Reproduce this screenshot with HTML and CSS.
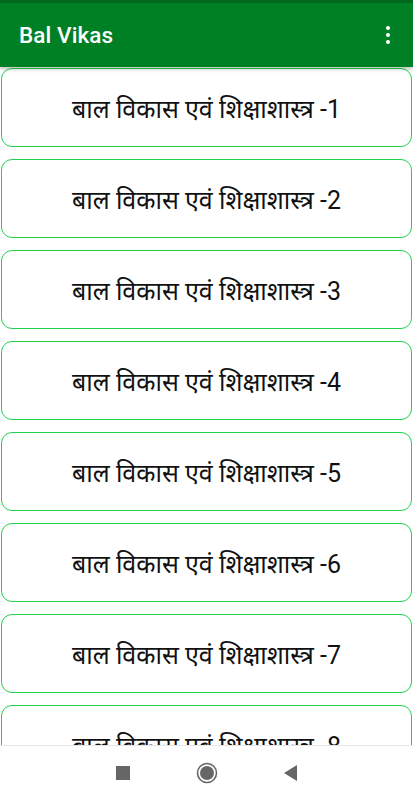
FILE: index.html
```html
<!DOCTYPE html>
<html lang="hi">
<head>
    <meta charset="UTF-8">
    <meta name="viewport" content="width=device-width, initial-scale=1.0">
    <title>Bal Vikas</title>
    <link rel="stylesheet" href="styles.css">
</head>
<body>
    <div class="statusBar"></div>

    <!-- Toolbar -->
    <header class="appBar">
        <h1>Bal Vikas</h1>
        <span class="menuDots"><i></i><i></i><i></i></span>
    </header>

    <main class="chapterList">
        <div class="chapter">बाल विकास एवं शिक्षाशास्त्र -1</div>
        <div class="chapter">बाल विकास एवं शिक्षाशास्त्र -2</div>
        <div class="chapter">बाल विकास एवं शिक्षाशास्त्र -3</div>
        <div class="chapter">बाल विकास एवं शिक्षाशास्त्र -4</div>
        <div class="chapter">बाल विकास एवं शिक्षाशास्त्र -5</div>
        <div class="chapter">बाल विकास एवं शिक्षाशास्त्र -6</div>
        <div class="chapter">बाल विकास एवं शिक्षाशास्त्र -7</div>
        <div class="chapter">बाल विकास एवं शिक्षाशास्त्र -8</div>
    </main>

    <!-- Android navigation -->
    <nav class="navBar">
        <svg width="14" height="14" viewBox="0 0 14 14"><rect x="0" y="0" width="14" height="14" fill="#666"/></svg>
        <svg width="22" height="22" viewBox="0 0 22 22"><circle cx="11" cy="11" r="9.5" fill="none" stroke="#666" stroke-width="1.6"/><circle cx="11" cy="11" r="7" fill="#666"/></svg>
        <svg width="14" height="16" viewBox="0 0 14 16"><polygon points="13,0 13,16 0,8" fill="#666"/></svg>
    </nav>
</body>
</html>
```

FILE: styles.css
```css
/* Page */
body {
    font-family: Roboto, "Noto Sans", sans-serif;
    margin: 0;
    padding: 0;
    height: 800px;
    overflow: hidden;
    display: flex;
    flex-direction: column;
    background-color: #fff;
}

.statusBar {
    height: 3px;
    background-color: #006a1c;
}

/* Toolbar */
.appBar {
    height: 64px;
    flex-shrink: 0;
    display: flex;
    align-items: center;
    justify-content: space-between;
    padding: 0 19px;
    background-color: #008025;
    color: white;
    box-shadow: 0 2px 4px rgba(0, 0, 0, 0.25);
    position: relative;
    z-index: 1;
}

.appBar h1 {
    margin: 0;
    font-size: 22.5px;
    font-weight: 500;
    letter-spacing: 0.1px;
}

.menuDots {
    display: flex;
    flex-direction: column;
    gap: 3px;
    margin-right: 4px;
}

.menuDots i {
    width: 4px;
    height: 4px;
    border-radius: 50%;
    background-color: white;
}

/* Chapter cards */
.chapterList {
    flex: 1;
    overflow: hidden;
    padding: 1px 1px 0;
}

.chapter {
    height: 77px;
    margin-bottom: 12px;
    border: 1px solid #20d24e;
    border-radius: 11px;
    display: flex;
    align-items: center;
    justify-content: center;
    font-size: 25px;
    color: #111;
    background-color: white;
}

/* Navigation bar */
.navBar {
    height: 54px;
    flex-shrink: 0;
    display: flex;
    align-items: center;
    justify-content: center;
    gap: 66px;
    background-color: #fff;
    border-top: 1px solid #e6e6e6;
    position: relative;
    z-index: 1;
}
```
